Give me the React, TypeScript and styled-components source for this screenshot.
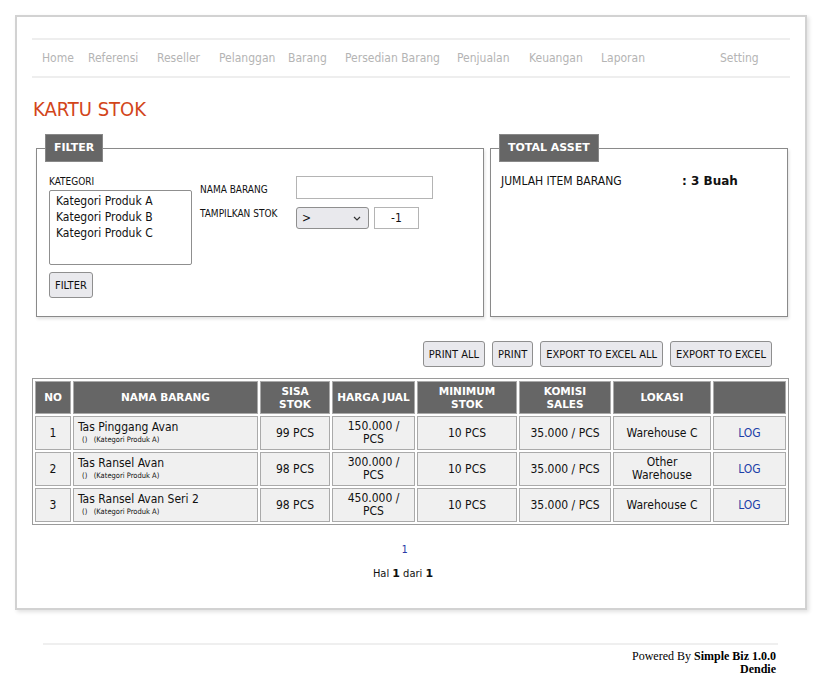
import React from "react";
import styled, { createGlobalStyle } from "styled-components";

const Global = createGlobalStyle`
  html, body { margin: 0; padding: 0; background: #fff; }
  * { box-sizing: border-box; }
`;

const tahoma = `"DejaVu Sans", Verdana, sans-serif`;

const Page = styled.div`
  width: 819px;
  padding: 15px 0 0 15px;
  font-family: ${tahoma};
  font-stretch: condensed;
  color: #111;
`;

const Card = styled.div`
  width: 792px;
  border: 2px solid #d2d2d2;
  box-shadow: 2px 2px 4px rgba(0, 0, 0, 0.12);
  padding: 21px 15px 28px 15px;
  background: #fff;
`;

const Nav = styled.nav`
  display: flex;
  align-items: center;
  height: 40px;
  border-top: 2px solid #eeeeee;
  border-bottom: 2px solid #eeeeee;
  padding: 0 10px;
`;

const NavItem = styled.a<{ $push?: boolean; $w: number }>`
  font-size: 12px;
  color: #b4b4b4;
  text-decoration: none;
  width: ${(p) => p.$w}px;
  margin-left: ${(p) => (p.$push ? "auto" : "0")};
  white-space: nowrap;
`;

const NavEnd = styled.span`
  width: 20px;
`;

const Title = styled.h1`
  margin: 19px 0 0 1px;
  font-size: 20px;
  line-height: 24px;
  font-weight: normal;
  color: #d2451a;
`;

const Panels = styled.div`
  display: grid;
  grid-template-columns: 448px 298px;
  column-gap: 6px;
  margin: 13px 0 0 4px;
`;

const Fieldset = styled.fieldset`
  margin: 0;
  height: 183px;
  border: 1px solid #8a8a8a;
  box-shadow: 1px 2px 3px rgba(0, 0, 0, 0.12);
  padding: 14px 12px 10px 12px;
  min-width: 0;
`;

const Legend = styled.legend`
  margin-left: -4px;
  background: #666666;
  color: #fff;
  font-family: "DejaVu Sans", Verdana, sans-serif;
  font-stretch: normal;
  font-weight: bold;
  font-size: 11px;
  line-height: 26px;
  padding: 0 8px;
  border: 1px solid #888;
`;

const FilterGrid = styled.div`
  display: flex;
  gap: 8px;
`;

const LeftCol = styled.div`
  display: flex;
  flex-direction: column;
  align-items: flex-start;
  width: 143px;
`;

const SmallLabel = styled.label`
  font-size: 10px;
  line-height: 12px;
  white-space: nowrap;
`;

const ListBox = styled.div`
  width: 143px;
  height: 75px;
  margin-top: 2px;
  border: 1px solid #8f8f8f;
  border-radius: 2px;
  padding: 2px 0 0 6px;
`;

const ListOption = styled.div`
  font-size: 12px;
  line-height: 16px;
`;

const Button = styled.button`
  font-family: ${tahoma};
  font-stretch: condensed;
  font-size: 11px;
  color: #111;
  background: #e9e9ed;
  border: 1px solid #8f8f8f;
  border-radius: 3px;
  height: 26px;
  padding: 0 5px;
  white-space: nowrap;
`;

const FilterBtn = styled(Button)`
  margin-top: 7px;
`;

const FormGrid = styled.div`
  display: grid;
  grid-template-columns: 96px auto;
  row-gap: 8px;
  align-content: start;
`;

const FormLabel = styled(SmallLabel)<{ $top?: boolean }>`
  align-self: ${(p) => (p.$top ? "start" : "end")};
  padding-top: ${(p) => (p.$top ? "1px" : "0")};
  padding-bottom: ${(p) => (p.$top ? "0" : "3px")};
`;

const TextInput = styled.input`
  width: 137px;
  height: 23px;
  border: 1px solid #b4b4b4;
  font-family: ${tahoma};
  font-size: 12px;
  padding: 0 4px;
`;

const InlineRow = styled.div`
  display: flex;
  gap: 5px;
`;

const SelectBox = styled.div`
  width: 73px;
  height: 22px;
  border: 1px solid #8f8f8f;
  border-radius: 3px;
  background: #e9e9ed;
  display: flex;
  align-items: center;
  justify-content: space-between;
  padding: 0 7px 0 5px;
  font-size: 12px;
`;

const NumInput = styled.div`
  width: 45px;
  height: 22px;
  border: 1px solid #b4b4b4;
  font-size: 12px;
  display: flex;
  align-items: center;
  justify-content: center;
`;

const AssetRow = styled.div`
  display: grid;
  grid-template-columns: 181px auto;
  margin: -2px 0 0 -2px;
  font-size: 12px;
`;

const Strong = styled.span`
  font-weight: bold;
  font-family: "DejaVu Sans", Verdana, sans-serif;
  font-stretch: normal;
`;

const Actions = styled.div`
  display: flex;
  justify-content: flex-end;
  gap: 7px;
  margin: 24px 18px 0 0;
`;

const Table = styled.table`
  margin-top: 11px;
  width: 757px;
  table-layout: fixed;
  border: 1px solid #9a9a9a;
  border-spacing: 2px;
  border-collapse: separate;
`;

const Th = styled.th`
  background: #666666;
  color: #fff;
  font-family: "DejaVu Sans", Verdana, sans-serif;
  font-stretch: normal;
  font-size: 10.5px;
  line-height: 13px;
  font-weight: bold;
  border: 1px solid #aaa;
  height: 33px;
  padding: 0 2px;
  text-align: center;
`;

const Td = styled.td<{ $left?: boolean }>`
  background: #f0f0f0;
  border: 1px solid #aaa;
  font-size: 12px;
  line-height: 13px;
  text-align: ${(p) => (p.$left ? "left" : "center")};
  padding: ${(p) => (p.$left ? "0 4px" : "0 3px")};
  height: 34px;
  vertical-align: middle;
`;

const Sub = styled.div`
  font-size: 7.5px;
  line-height: 11px;
  padding-left: 4px;
  white-space: pre;
`;

const Link = styled.a`
  color: #1c3fa8;
  text-decoration: none;
  font-size: 12px;
`;

const Pager = styled.div`
  display: flex;
  flex-direction: column;
  align-items: center;
  gap: 12px;
  margin: 19px 16px 0 0;
  font-size: 11px;
`;

const PageLink = styled.a`
  color: #2a3aa6;
  font-family: "DejaVu Sans Mono", monospace;
  font-size: 10px;
  margin-left: 3px;
`;

const Footer = styled.footer`
  margin: 33px 41px 0 28px;
  border-top: 2px solid #efefef;
  padding: 5px 2px 0 0;
  text-align: right;
  font-family: "Liberation Serif", "Times New Roman", serif;
  font-stretch: normal;
  font-size: 12px;
  line-height: 12.5px;
  color: #000;
`;

const navItems: [string, number][] = [
  ["Home", 46],
  ["Referensi", 69],
  ["Reseller", 62],
  ["Pelanggan", 69],
  ["Barang", 57],
  ["Persedian Barang", 112],
  ["Penjualan", 72],
  ["Keuangan", 72],
  ["Laporan", 60],
];

const rows = [
  { no: 1, name: "Tas Pinggang Avan", sisa: "99 PCS", harga: "150.000", lokasi: "Warehouse C" },
  { no: 2, name: "Tas Ransel Avan", sisa: "98 PCS", harga: "300.000", lokasi: "Other Warehouse" },
  { no: 3, name: "Tas Ransel Avan Seri 2", sisa: "98 PCS", harga: "450.000", lokasi: "Warehouse C" },
];

const cols = [36, 185, 70, 83, 100, 92, 98, 73];

export default function App() {
  return (
    <Page>
      <Global />
      <Card>
        <Nav>
          {navItems.map(([n, w]) => (
            <NavItem key={n} $w={w}>{n}</NavItem>
          ))}
          <NavItem $push $w={40}>Setting</NavItem>
          <NavEnd />
        </Nav>
        <Title>KARTU STOK</Title>
        <Panels>
          <Fieldset>
            <Legend>FILTER</Legend>
            <FilterGrid>
              <LeftCol>
                <SmallLabel>KATEGORI</SmallLabel>
                <ListBox>
                  <ListOption>Kategori Produk A</ListOption>
                  <ListOption>Kategori Produk B</ListOption>
                  <ListOption>Kategori Produk C</ListOption>
                </ListBox>
                <FilterBtn>FILTER</FilterBtn>
              </LeftCol>
              <FormGrid>
                <FormLabel>NAMA BARANG</FormLabel>
                <TextInput />
                <FormLabel $top>TAMPILKAN STOK</FormLabel>
                <InlineRow>
                  <SelectBox>
                    <span>&gt;</span>
                    <svg width="8" height="5" viewBox="0 0 8 5">
                      <path d="M1 1l3 3 3-3" fill="none" stroke="#333" strokeWidth="1.2" />
                    </svg>
                  </SelectBox>
                  <NumInput>-1</NumInput>
                </InlineRow>
              </FormGrid>
            </FilterGrid>
          </Fieldset>
          <Fieldset>
            <Legend>TOTAL ASSET</Legend>
            <AssetRow>
              <span>JUMLAH ITEM BARANG</span>
              <Strong>: 3 Buah</Strong>
            </AssetRow>
          </Fieldset>
        </Panels>
        <Actions>
          <Button>PRINT ALL</Button>
          <Button>PRINT</Button>
          <Button>EXPORT TO EXCEL ALL</Button>
          <Button>EXPORT TO EXCEL</Button>
        </Actions>
        <Table>
          <colgroup>
            {cols.map((w, i) => (
              <col key={i} style={{ width: w }} />
            ))}
          </colgroup>
          <thead>
            <tr>
              <Th>NO</Th>
              <Th>NAMA BARANG</Th>
              <Th>SISA<br />STOK</Th>
              <Th>HARGA JUAL</Th>
              <Th>MINIMUM<br />STOK</Th>
              <Th>KOMISI<br />SALES</Th>
              <Th>LOKASI</Th>
              <Th></Th>
            </tr>
          </thead>
          <tbody>
            {rows.map((r) => (
              <tr key={r.no}>
                <Td>{r.no}</Td>
                <Td $left>
                  {r.name}
                  <Sub>{"()   (Kategori Produk A)"}</Sub>
                </Td>
                <Td>{r.sisa}</Td>
                <Td>{r.harga} /<br />PCS</Td>
                <Td>10 PCS</Td>
                <Td>35.000 / PCS</Td>
                <Td>{r.lokasi}</Td>
                <Td><Link>LOG</Link></Td>
              </tr>
            ))}
          </tbody>
        </Table>
        <Pager>
          <PageLink>1</PageLink>
          <div>Hal <Strong>1</Strong> dari <Strong>1</Strong></div>
        </Pager>
      </Card>
      <Footer>
        Powered By <b>Simple Biz 1.0.0</b>
        <br />
        <b>Dendie</b>
      </Footer>
    </Page>
  );
}
